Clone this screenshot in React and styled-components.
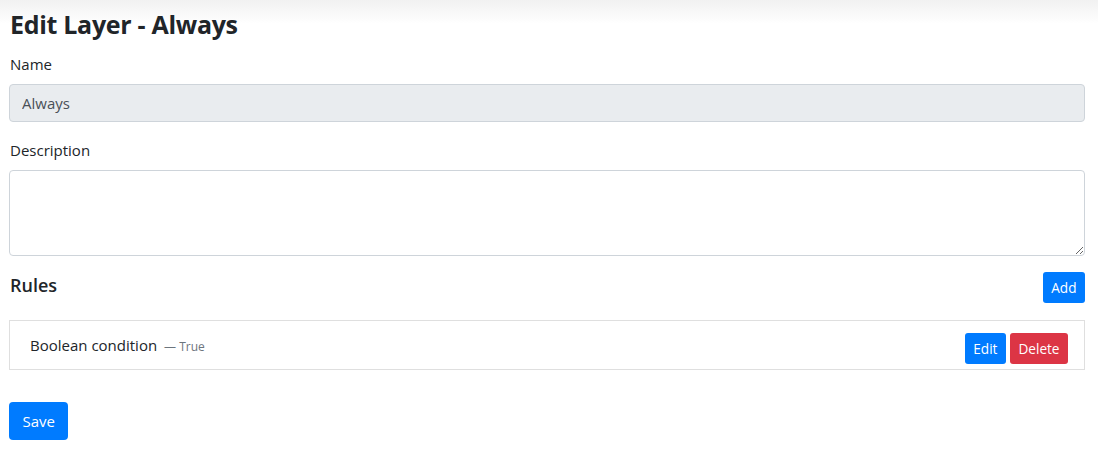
import styled, { createGlobalStyle } from "styled-components";

const GlobalStyle = createGlobalStyle`
  html, body {
    margin: 0;
    background: #fff linear-gradient(#f1f1f1, #fff 24px) no-repeat;
    font-family: "Open Sans", "Noto Sans", sans-serif;
    color: #212529;
  }
`;

const Page = styled.div`
  padding: 9px 13px 12px 9px;
`;

const Title = styled.h3`
  margin: 0 0 14px 1px;
  font-size: 25px;
  font-weight: 700;
  line-height: 30px;
  letter-spacing: -0.3px;
`;

const Group = styled.div`
  margin-bottom: 17px;
`;

const Label = styled.label`
  display: block;
  margin: 0 0 9px 1px;
  font-size: 15px;
  line-height: 22px;
`;

const Input = styled.input`
  box-sizing: border-box;
  display: block;
  width: 100%;
  height: 38px;
  padding: 6px 12px;
  font: inherit;
  font-size: 15px;
  color: #495057;
  background: ${(p) => (p.disabled ? "#e9ecef" : "#fff")};
  border: 1px solid #ced4da;
  border-radius: 4px;
`;

const TextArea = styled.textarea`
  box-sizing: border-box;
  display: block;
  width: 100%;
  height: 86px;
  padding: 6px 12px;
  font: inherit;
  border: 1px solid #ced4da;
  border-radius: 4px;
`;

const SectionHead = styled.div`
  display: flex;
  justify-content: space-between;
  align-items: flex-end;
  margin: -1px 0 17px;
`;

const SectionTitle = styled.h5`
  margin: 0 0 6px 1px;
  font-size: 18px;
  font-weight: 600;
  line-height: 24px;
`;

const Button = styled.button`
  box-sizing: border-box;
  border: none;
  border-radius: ${(p) => (p.small ? "3px" : "4px")};
  height: ${(p) => (p.small ? "31px" : "38px")};
  padding: ${(p) => (p.small ? "0 8.5px" : "0 13.5px")};
  font-family: inherit;
  font-size: ${(p) => (p.small ? "13.6px" : "15px")};
  color: #fff;
  background: ${(p) => (p.danger ? "#dc3545" : "#007bff")};
`;

const List = styled.ul`
  list-style: none;
  margin: 0 0 32px;
  padding: 0;
`;

const Item = styled.li`
  display: flex;
  align-items: center;
  justify-content: space-between;
  height: 50px;
  box-sizing: border-box;
  padding: 0 16px 0 20px;
  border: 1px solid #dfdfdf;
`;

const RuleName = styled.span`
  font-size: 15px;
`;

const RuleValue = styled.small`
  margin-left: 7px;
  font-size: 12px;
  color: #6c757d;
`;

const Actions = styled.div`
  display: flex;
  gap: 4px;
  margin-top: 7px;
`;

export default function App() {
  return (
    <Page>
      <GlobalStyle />
      <Title>Edit Layer - Always</Title>
      <Group>
        <Label>Name</Label>
        <Input value="Always" disabled readOnly />
      </Group>
      <Group>
        <Label>Description</Label>
        <TextArea />
      </Group>
      <SectionHead>
        <SectionTitle>Rules</SectionTitle>
        <Button small>Add</Button>
      </SectionHead>
      <List>
        <Item>
          <span>
            <RuleName>Boolean condition</RuleName>
            <RuleValue>— True</RuleValue>
          </span>
          <Actions>
            <Button small>Edit</Button>
            <Button small danger>Delete</Button>
          </Actions>
        </Item>
      </List>
      <Button>Save</Button>
    </Page>
  );
}
